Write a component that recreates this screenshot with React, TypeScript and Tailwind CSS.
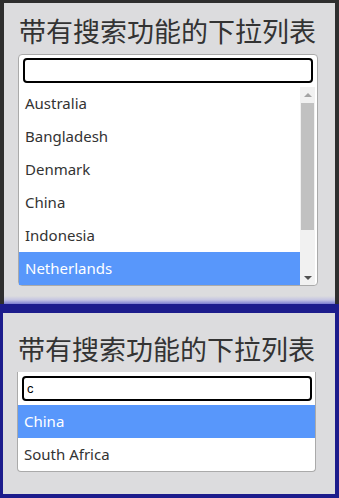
import React from "react";

const countries = ["Australia", "Bangladesh", "Denmark", "China", "Indonesia", "Netherlands"];
const filtered = ["China", "South Africa"];

const titleFont = { fontFamily: '"Noto Sans CJK SC", "Noto Sans", sans-serif' };

const Title = () => (
  <h1 className="text-[27px] leading-[38px] text-[#333] font-normal whitespace-nowrap" style={titleFont}>
    带有搜索功能的下拉列表
  </h1>
);

const SearchInput = ({ value }: { value: string }) => (
  <input
    readOnly
    value={value}
    className="block w-[290px] h-[25px] border-2 border-black rounded-[4px] bg-white px-[3px] text-[13px] text-black outline-none font-['Liberation_Sans',sans-serif]"
  />
);

const Row = ({ label, active }: { label: string; active?: boolean }) => (
  <li
    className={`h-[33px] px-[6px] flex items-center text-[15px] font-['Noto_Sans',sans-serif] ${
      active ? "bg-[#5897fb] text-white" : "text-[#333]"
    }`}
  >
    {label}
  </li>
);

// fake classic scrollbar, drawn by hand
const Scrollbar = () => (
  <div className="w-[15px] h-full bg-[#f1f1f1] flex flex-col items-center">
    <div className="h-[15px] w-full flex items-center justify-center">
      <div className="w-0 h-0 border-l-[4px] border-r-[4px] border-b-[4px] border-l-transparent border-r-transparent border-b-[#a3a3a3]" />
    </div>
    <div className="w-[13px] h-[127px] bg-[#c1c1c1] mt-[1px]" />
    <div className="flex-1" />
    <div className="h-[15px] w-full flex items-center justify-center">
      <div className="w-0 h-0 border-l-[4px] border-r-[4px] border-t-[4px] border-l-transparent border-r-transparent border-t-[#505050]" />
    </div>
  </div>
);

export default function App() {
  return (
    <div className="w-[339px] h-[498px] flex flex-col bg-[#1c1c8c] overflow-hidden">
      {/* first demo */}
      <div className="h-[304px] bg-[#2e2e2e] pt-[3px] pl-[4px] pr-[4px] flex">
        <div className="flex-1 bg-[#dcdcde] flex flex-col">
          <div className="pl-[15px] pt-[9px]">
            <Title />
          </div>
          <div className="ml-[14px] mt-[4px] w-[300px] bg-white border border-[#aaa] rounded-[4px]">
            <div className="pt-[3px] pl-[4px] pb-[4px]">
              <SearchInput value="" />
            </div>
            <div className="flex h-[198px] pr-[2px]">
              <ul className="flex-1 overflow-hidden">
                {countries.map((c) => (
                  <Row key={c} label={c} active={c === "Netherlands"} />
                ))}
              </ul>
              <Scrollbar />
            </div>
          </div>
          <div className="flex-1" />
          <div className="h-[8px] bg-linear-to-b from-[#dcdcde] via-[#c4c4e2] to-[#7c7cd0]" />
        </div>
      </div>

      {/* second demo */}
      <div className="flex-1 pt-[9px] pl-[3px] pr-[4px] pb-[4px] flex">
        <div className="flex-1 bg-[#dcdcde] flex flex-col">
          <div className="pl-[15px] pt-[17px]">
            <Title />
          </div>
          <div className="ml-[14px] mt-[4px] w-[299px] bg-white border border-[#aaa] border-t-0 rounded-b-[4px]">
            <div className="pt-[4px] pl-[4px] pb-[4px]">
              <SearchInput value="c" />
            </div>
            <ul>
              {filtered.map((c) => (
                <Row key={c} label={c} active={c === "China"} />
              ))}
            </ul>
          </div>
        </div>
      </div>
    </div>
  );
}
